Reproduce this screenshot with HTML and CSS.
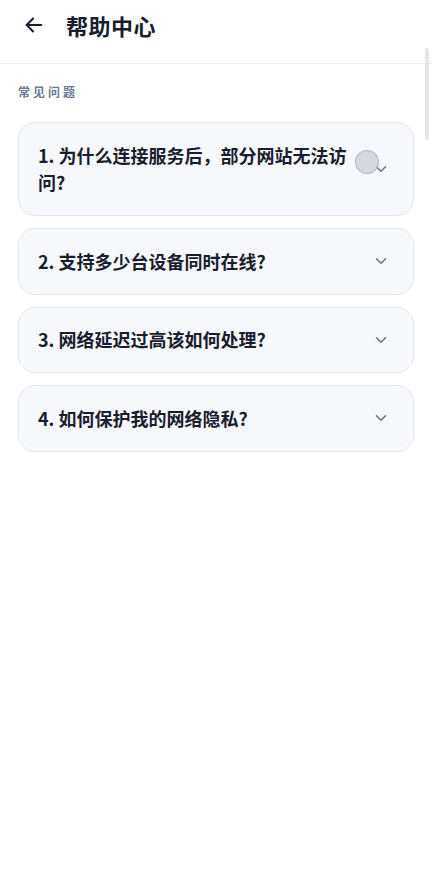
FILE: index.html
```html
<!DOCTYPE html>
<html>
<head>
    <meta charset="utf-8">
    <title>帮助中心</title>
    <link rel="stylesheet" href="styles.css">
</head>
<body>
    <div class="page">
        <div class="header">
            <span class="back">
                <svg width="22" height="22" viewBox="0 0 24 24" fill="none" stroke="#1a1d2e" stroke-width="2.2" stroke-linecap="round" stroke-linejoin="round">
                    <path d="M20 12H4"/>
                    <path d="M11 5l-7 7 7 7"/>
                </svg>
            </span>
            <h1 class="title">帮助中心</h1>
        </div>
        <div class="content">
            <p class="section-label">常见问题</p>
            <div class="faq-list">
                <div class="faq-item">
                    <p class="question">1. 为什么连接服务后，部分网站无法访问?</p>
                    <span class="chevron">
                        <span class="touch"></span>
                        <svg width="18" height="18" viewBox="0 0 24 24" fill="none" stroke="#6b7280" stroke-width="2" stroke-linecap="round" stroke-linejoin="round"><path d="M6 9l6 6 6-6"/></svg>
                    </span>
                </div>
                <div class="faq-item">
                    <p class="question">2. 支持多少台设备同时在线?</p>
                    <span class="chevron">
                        <svg width="18" height="18" viewBox="0 0 24 24" fill="none" stroke="#6b7280" stroke-width="2" stroke-linecap="round" stroke-linejoin="round"><path d="M6 9l6 6 6-6"/></svg>
                    </span>
                </div>
                <div class="faq-item">
                    <p class="question">3. 网络延迟过高该如何处理?</p>
                    <span class="chevron">
                        <svg width="18" height="18" viewBox="0 0 24 24" fill="none" stroke="#6b7280" stroke-width="2" stroke-linecap="round" stroke-linejoin="round"><path d="M6 9l6 6 6-6"/></svg>
                    </span>
                </div>
                <div class="faq-item">
                    <p class="question">4. 如何保护我的网络隐私?</p>
                    <span class="chevron">
                        <svg width="18" height="18" viewBox="0 0 24 24" fill="none" stroke="#6b7280" stroke-width="2" stroke-linecap="round" stroke-linejoin="round"><path d="M6 9l6 6 6-6"/></svg>
                    </span>
                </div>
            </div>
        </div>
        <div class="scrollbar"></div>
    </div>
</body>
</html>
```

FILE: styles.css
```css
* {
    box-sizing: border-box;
    margin: 0;
    padding: 0;
}

body {
    background: #ffffff;
    font-family: 'Inter', 'Noto Sans CJK SC', sans-serif;
    color: #1a1d2e;
}

.page {
    position: relative;
    min-height: 872px;
}

.header {
    height: 64px;
    display: flex;
    align-items: center;
    padding: 0 20px 14px 22px;
    border-bottom: 1px solid #eeeff2;
}

.back {
    width: 24px;
    height: 24px;
    display: flex;
    align-items: center;
    justify-content: center;
    margin-right: 20px;
}

.title {
    font-size: 22px;
    font-weight: 700;
    letter-spacing: 0.5px;
    font-family: 'Noto Sans CJK SC', sans-serif;
}

.content {
    padding: 19px 18px 0 18px;
}

.section-label {
    font-size: 12px;
    font-weight: 700;
    color: #6b7a90;
    letter-spacing: 3px;
    font-family: 'Noto Sans CJK SC', sans-serif;
    line-height: 17px;
    margin-bottom: 22px;
}

.faq-list {
    display: flex;
    flex-direction: column;
    gap: 12px;
}

.faq-item {
    display: flex;
    align-items: center;
    gap: 14px;
    background: #f7f8fc;
    border: 1px solid #e4e6ee;
    border-radius: 17px;
    padding: 18.5px 22px 18.5px 19px;
}

.question {
    flex: 1;
    font-size: 18px;
    font-weight: 700;
    line-height: 27.5px;
    color: #1a1d2e;
    font-family: 'Noto Sans CJK SC', sans-serif;
}

.chevron {
    position: relative;
    width: 20px;
    height: 20px;
    display: flex;
    align-items: center;
    justify-content: center;
}

.touch {
    position: absolute;
    left: -16px;
    top: -9px;
    width: 24px;
    height: 24px;
    border-radius: 50%;
    background: rgba(205, 208, 216, 0.8);
    border: 1.5px solid rgba(160, 175, 210, 0.8);
}

.scrollbar {
    position: absolute;
    right: 3px;
    top: 48px;
    width: 4px;
    height: 92px;
    border-radius: 2px;
    background: #e6e6e8;
}
```
